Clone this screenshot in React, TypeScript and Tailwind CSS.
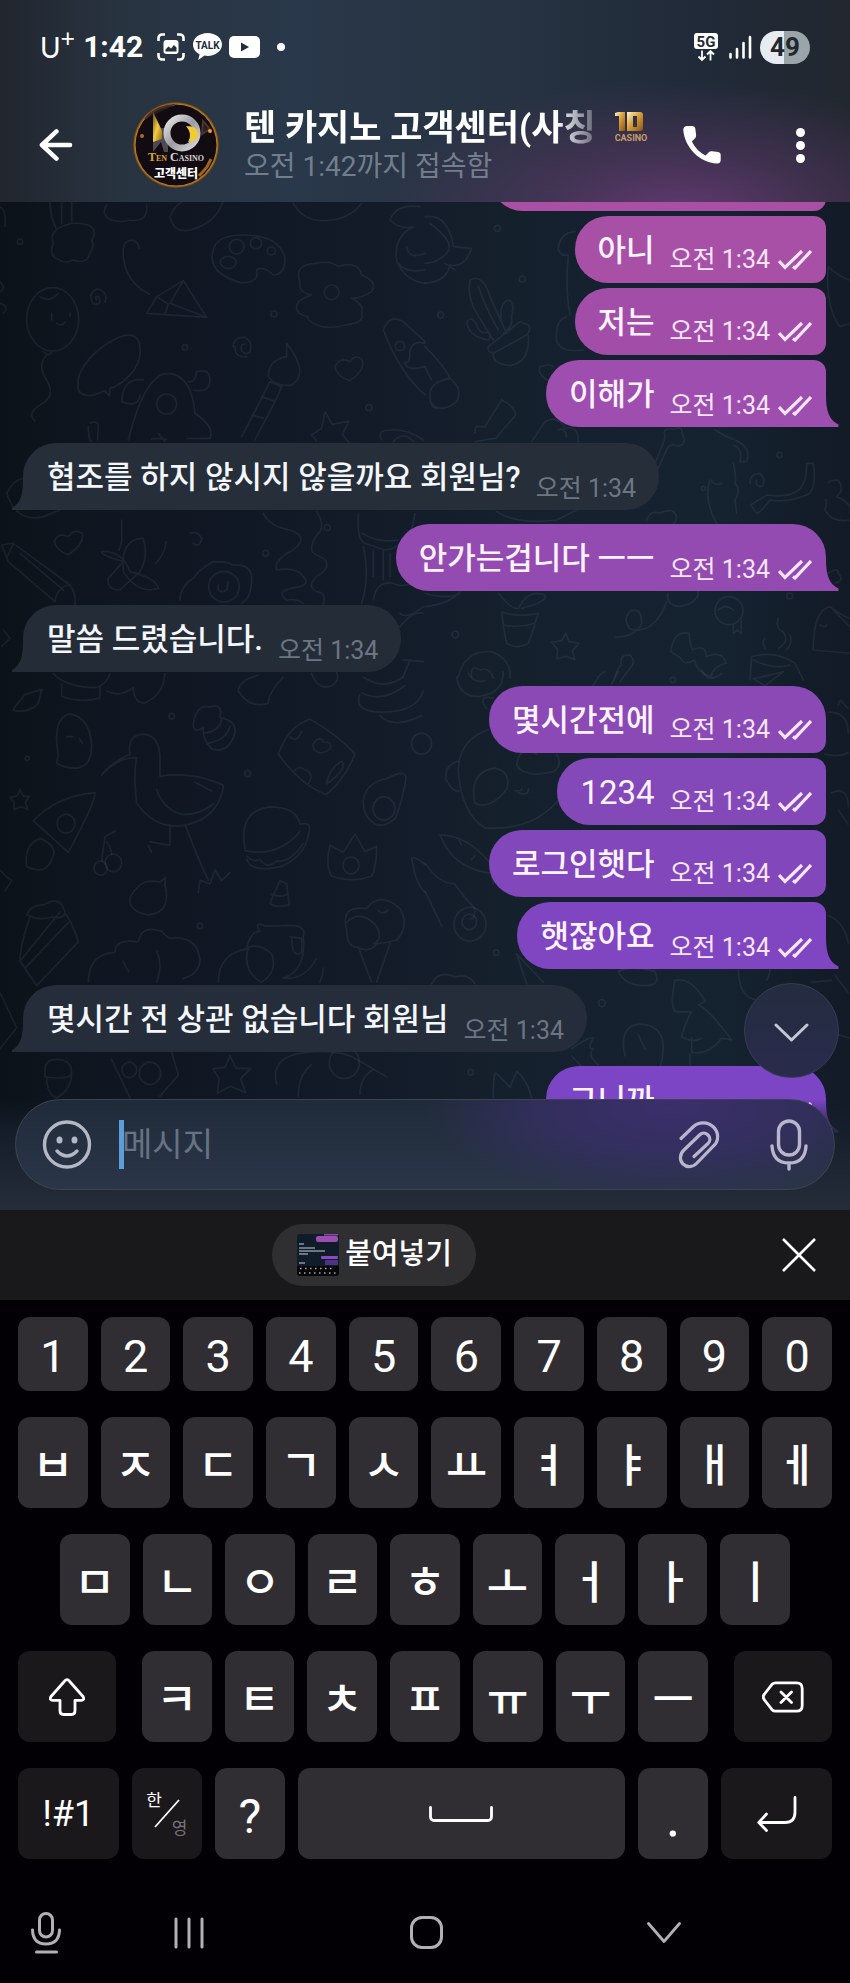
import { useState } from "react";
import clsx from "clsx";

type Message = {
  text: string;
  color: string;
};

type Group = {
  from: "me" | "them";
  messages: Message[];
  continued?: boolean;
};

const TIME = "오전 1:34";

const groups: Group[] = [
  {
    from: "me",
    continued: true,
    messages: [
      { text: "아니", color: "bg-[#a750a6]" },
      { text: "저는", color: "bg-[#a24ea9]" },
      { text: "이해가", color: "bg-[#9d4eae] text-[#9d4eae]" },
    ],
  },
  {
    from: "them",
    messages: [
      { text: "협조를 하지 않시지 않을까요 회원님?", color: "bg-[#252e39] text-[#252e39]" },
    ],
  },
  {
    from: "me",
    messages: [{ text: "안가는겁니다 ㅡㅡ", color: "bg-[#934ab1] text-[#934ab1]" }],
  },
  {
    from: "them",
    messages: [{ text: "말씀 드렸습니다.", color: "bg-[#242d37] text-[#242d37]" }],
  },
  {
    from: "me",
    messages: [
      { text: "몇시간전에", color: "bg-[#8a49b4]" },
      { text: "1234", color: "bg-[#8449b8]" },
      { text: "로그인햇다", color: "bg-[#8147bb]" },
      { text: "햇잖아요", color: "bg-[#8045c1] text-[#8045c1]" },
    ],
  },
  {
    from: "them",
    messages: [
      { text: "몇시간 전 상관 없습니다 회원님", color: "bg-[#252d3a] text-[#252d3a]" },
    ],
  },
  {
    from: "me",
    messages: [{ text: "그니까", color: "bg-[#7c45c6] text-[#7c45c6]" }],
  },
];

const numberKeys = ["1", "2", "3", "4", "5", "6", "7", "8", "9", "0"];
const topKeys = ["ㅂ", "ㅈ", "ㄷ", "ㄱ", "ㅅ", "ㅛ", "ㅕ", "ㅑ", "ㅐ", "ㅔ"];
const homeKeys = ["ㅁ", "ㄴ", "ㅇ", "ㄹ", "ㅎ", "ㅗ", "ㅓ", "ㅏ", "ㅣ"];
const bottomKeys = ["ㅋ", "ㅌ", "ㅊ", "ㅍ", "ㅠ", "ㅜ", "ㅡ"];

function StatusBar() {
  return (
    <div className="flex h-[94px] items-center pr-10 pl-10 text-white">
      <span className="flex items-start font-['Lato'] leading-none">
        <span className="text-[28px]">U</span>
        <span className="-mt-2 text-[25px]">+</span>
      </span>
      <span className="ml-2 text-[30px] leading-none font-bold">1:42</span>
      <svg width="28" height="28" viewBox="0 0 28 28" className="ml-3.5" fill="none">
        <path
          d="M1.5 8V5a3.5 3.5 0 0 1 3.500-3.500H8M20 1.500h3A3.500 3.500 0 0 1 26.500 5V8M26.500 20v3a3.500 3.500 0 0 1-3.500 3.500H20M8 26.500H5A3.500 3.500 0 0 1 1.500 23V20"
          stroke="#fff"
          strokeWidth="2.600"
        />
        <rect x="6.500" y="7" width="15" height="14" rx="3" fill="#fff" />
        <path d="M8.500 18.500v-2l3-3 2.500 2 3-3.500 2.500 2.500v4z" fill="#27323f" />
      </svg>
      <svg width="29" height="28" viewBox="0 0 29 28" className="ml-2">
        <path
          d="M14.500 0C6.500 0 0 5 0 11.500c0 4.200 2.700 7.800 6.600 9.800L5.200 27l6.300-4.400c1 .2 2 .3 3 .3 8 0 14.500-5 14.500-11.400S22.500 0 14.500 0z"
          fill="#fff"
        />
        <text
          x="14.500"
          y="15.500"
          textAnchor="middle"
          className="fill-[#222d3a] text-[10px] font-bold"
        >
          TALK
        </text>
      </svg>
      <svg width="31" height="22" viewBox="0 0 31 22" className="ml-[7px]">
        <rect width="31" height="22" rx="5" fill="#fff" />
        <path d="M12 6.500v9l8-4.500z" fill="#222d3a" />
      </svg>
      <span className="ml-[17px] size-2 rounded-full bg-white" />

      <svg width="24" height="29" viewBox="0 0 24 29" className="ml-auto">
        <rect width="24" height="16" rx="3" fill="#fff" />
        <text
          x="12"
          y="13.500"
          textAnchor="middle"
          className="fill-[#1f2a37] text-[15px] font-bold"
        >
          5G
        </text>
        <path
          d="M8 17.500v9M4.500 23.500 8 27l3.500-3.500M16.500 27.500v-9M13 21.500l3.500-3.500 3.500 3.500"
          stroke="#fff"
          strokeWidth="1.800"
          fill="none"
        />
      </svg>
      <svg width="24" height="24" viewBox="0 0 24 24" className="ml-2.5">
        <path
          d="M2.500 19v3.500M9 14v8.500M15.500 8v14.500M22 2v20.500"
          stroke="#fff"
          strokeWidth="2.600"
          strokeLinecap="round"
        />
      </svg>
      <span className="ml-2 flex h-[33px] w-[50px] items-center justify-center rounded-full bg-[linear-gradient(90deg,#e7ebf2_48%,#9aa5a9_48%)] text-[26px] leading-none font-bold text-[#22272e]">
        49
      </span>
    </div>
  );
}

function Avatar() {
  return (
    <svg width="86" height="86" viewBox="0 0 86 86" className="ml-[60px] shrink-0" role="img">
      <defs>
        <radialGradient id="ring" cx=".5" cy=".5" r=".5">
          <stop offset=".93" stopColor="#e09a2c" />
          <stop offset="1" stopColor="#5a3810" />
        </radialGradient>
        <linearGradient id="gold" x1="0" y1="0" x2="1" y2="1">
          <stop offset="0" stopColor="#6b4a12" />
          <stop offset=".5" stopColor="#f4cf3d" />
          <stop offset="1" stopColor="#8d6216" />
        </linearGradient>
        <linearGradient id="steel" x1="0" y1="0" x2="1" y2="1">
          <stop offset="0" stopColor="#e8e8ea" />
          <stop offset=".5" stopColor="#9b9ba0" />
          <stop offset="1" stopColor="#d8d8dc" />
        </linearGradient>
        <linearGradient id="wordmark">
          <stop offset=".34" stopColor="#d9a62e" />
          <stop offset=".34" stopColor="#d6d6da" />
        </linearGradient>
      </defs>
      <circle cx="43" cy="43" r="43" fill="url(#ring)" />
      <circle cx="43" cy="43" r="40.500" fill="#120c12" />
      <path d="M12 17c8-10 20-14 30-14M70 19l7 8-8 5z" stroke="#4a3230" strokeWidth="2" fill="#2c1d1c" />
      <path d="M20 10l8 16h5l2-8v32h-4l-3-10-8 10z" fill="#4d4a52" />
      <path d="M20 10l9 19v8l-9 3z" fill="url(#gold)" />
      <circle cx="49" cy="31" r="15" fill="none" stroke="url(#steel)" strokeWidth="7" />
      <path d="M53 24q12 0 12 8t-10 8q5-8-2-16z" fill="#f0cb34" />
      <circle cx="77" cy="29" r="2" fill="#e89a3c" />
      <circle cx="9" cy="34" r="2" fill="#b06a2c" />
      <path d="M66 74l8-9 4-8" stroke="#9c6420" strokeWidth="3" fill="none" />
      <text
        x="43"
        y="59"
        textAnchor="middle"
        fill="url(#wordmark)"
        className="font-['Liberation_Serif'] text-[12px] font-bold [font-variant-caps:small-caps]"
      >
        Ten Casino
      </text>
      <text
        x="43"
        y="76"
        textAnchor="middle"
        className="fill-white font-['Noto_Sans_CJK_KR'] text-[12px] font-black"
      >
        고객센터
      </text>
    </svg>
  );
}

function Header() {
  return (
    <header className="bg-[radial-gradient(ellipse_36%_66%_at_80%_106%,#613970_0%,#52355fa6_45%,transparent_100%),linear-gradient(90deg,#21262f_0%,#283340_14%,#29384a_34%,#263241_62%,#202a38_82%,#22272f_100%)] pb-1.5">
      <StatusBar />
      <div className="flex h-[102px] items-center pr-[45px] pl-[39px] text-white">
        <button type="button" aria-label="뒤로">
          <svg width="34" height="34" viewBox="0 0 35 34" fill="none" stroke="#fff" strokeWidth="4.600" strokeLinecap="round" strokeLinejoin="round">
            <path d="M32 17H3M18 3 3 17l15 14" />
          </svg>
        </button>
        <Avatar />
        <div className="ml-[25px] w-[354px] shrink-0 pt-0.5">
          <h1 className="overflow-hidden mask-[linear-gradient(90deg,#000_88%,#0003_100%)] text-[35px] leading-[42px] font-bold whitespace-nowrap">
            텐 카지노 고객센터(사칭
          </h1>
          <p className="text-[28px] leading-[34px] text-[#737e8c]">오전 1:42까지 접속함</p>
        </div>
        <svg width="38" height="32" viewBox="0 0 38 32" className="mb-9 ml-3.5 shrink-0">
          <defs>
            <linearGradient id="coin" x1="0" y1="0" x2="1" y2="1">
              <stop offset="0" stopColor="#fff3cf" />
              <stop offset=".45" stopColor="#d9a03a" />
              <stop offset="1" stopColor="#8a5512" />
            </linearGradient>
          </defs>
          <path d="M3 2l3-1h7v19H7V5H3z" fill="url(#coin)" />
          <path d="M15 1h13q3 0 3 3v13q0 3-3 3H15zM21 5v11h4V5z" fill="url(#coin)" fillRule="evenodd" />
          <text x="19" y="30" textAnchor="middle" className="fill-[#c79b6a] text-[9px] font-bold">
            CASINO
          </text>
        </svg>
        <button type="button" aria-label="통화" className="ml-auto">
          <svg width="38" height="38" viewBox="0 0 38 38" fill="#fff">
            <path d="M4 0h5.500q2.500 0 2.800 2.500l.8 6.500q.2 1.800-1 3.200L8.800 15.500Q14 25.500 22.500 29.500l3.300-3.300q1.300-1.300 3.200-1l6.300.8q2.400.4 2.400 2.800V34q0 3.500-3.700 3.500C16 36.500 1.500 21 .3 4 .2 0 4 0 4 0z" />
          </svg>
        </button>
        <button type="button" aria-label="더보기" className="ml-[75px] flex w-[9px] shrink-0 flex-col gap-1">
          <span className="size-[9px] rounded-full bg-white" />
          <span className="size-[9px] rounded-full bg-white" />
          <span className="size-[9px] rounded-full bg-white" />
        </button>
      </div>
    </header>
  );
}

// Line drawings of the chat wallpaper, one group per quarter of the screen
function Wallpaper() {
  return (
    <svg
      className="absolute inset-0 h-full w-full"
      fill="none"
      stroke="#8fa6b8"
      strokeOpacity=".1"
      strokeWidth="5"
      strokeLinecap="round"
      strokeLinejoin="round"
      aria-hidden="true"
    >
      <g transform="translate(0 -2) scale(.3333)">
        <path d="M150 0q0 50 20 88M185 0v70M215 0v70M170 88q-20 20-10 40q-15 40 15 50q20 15 45 2q40 15 50-20q15-20 5-40q20-30-10-45q-50-15-95 13" />
        <path d="M320 15q-20 30 15 45q30 10 50 0q60 10 55-45M510 50q20-50 60-50M510 50q10 50 60 40q80-20 100-90M880 10q30 55 100 52q70-5 105-52" />
        <path d="M640 150q10-45 90-45q110 0 125 70q0 50-35 50q-30-30-50-15q10 40-50 38q-100-30-80-98z" />
        <circle cx="710" cy="140" r="22" />
        <circle cx="768" cy="130" r="17" />
        <circle cx="814" cy="153" r="12" />
        <ellipse cx="685" cy="187" rx="24" ry="18" />
        <path d="M418 145q-5-30-35-22q-25 15-5 85q20 50 70 75M440 340l30-50 80-48 70 110zM470 290l35 22-10 30M550 242l-40 68 110 42" />
        <path d="M900 245q-20-50 45-55q50-10 70 10q60-20 70 25q50 20 30 50q-30 20-60 20q40 20 30 45q10 30-50 35q-30 10-70 5q-50-20-40-30q-50-10-30-45q20-15 40-20q-40-5-35-40z" />
        <circle cx="995" cy="277" r="22" />
        <path d="M1170 60q20-50 90-40M1170 60q30 30 70 20q-60 30-50 100q20 60 85 70M1275 160q-50 20-55-20M1275 210q-60 10-80-20" />
        <ellipse cx="158" cy="358" rx="78" ry="95" />
        <path d="M120 290q30 20 55-10M155 340v20M210 340v10M170 370q15 10 25-3M130 455l15 10 10-8M140 465q-30 30 0 75q30 50-20 75q-40 25-15 48" />
        <path d="M290 300q-10-15 5-10q15 25-15 22q-20-30 10-45q35 5 25 40M700 440q0-30 35-28q25 15 15 45q-15 10-25-5q-5-20 10-20M705 440q0 35 35 30" />
        <path d="M235 570q-10-60 60-120q90-70 120-30q20 60-30 110q-30 30-55 35l-2 22-15-15q-60 30-78-2z" />
        <path d="M385 720q50-200 120-200q70 5 80 120q60 40 45 75h-70M430 540q-60-10-65 65q50 20 55-20M565 545q20 5 25-30q40-10 40 25q0 40-50 30M500 718q-30-5-45 0M475 700l20 25" />
        <circle cx="500" cy="612" r="30" />
        <path d="M860 430q70 90 15 125q-50 5-70-25q0-50 55-60zM810 545l35 15-20 45-60 115M810 545q-30 60-85 165M785 590l35 12M755 645l35 10" />
        <path d="M1050 485q-30-15-45 15q5 30 45 42q50-35 35-65q-20-15-35 8zM205 1010q-30-15-42 15q5 25 42 40q50-35 42-65q-25-15-42 10z" />
        <path d="M1150 390q20-50 60-25l65 60M1150 390q50 130 125 195M1275 430q-40-10-45 25q0 40-15 30q0 30 60 15" />
        <circle cx="1200" cy="438" r="14" />
        <path d="M975 635l22 38 50-10-20 40 20 25M975 635l-10 50-30 20 15 18M1145 720q-15-30 25-30q50-5 100 30M1180 725q30-35 60 0M270 670q20-10 25 5l-2 45M265 680q0 40 10 45" />
        <path d="M5 1035l35-5 170 125q20 30 15 60M5 1035l20 50 140 120M40 1030l-20 45M210 1155q-40 5-45 50M60 1060l130 110" />
        <path d="M305 1055q60-5 85 60q80 20 85 50q-60 20-105-50q-10-100 60-100q15 60-10 100l-60 55q-40 0-35-35l45-50q-70-20-65-30zM365 960v60q0 10-8 30M498 1025q0 30-30 65" />
        <path d="M540 1200q0-40 40-65q20-30 60-50q50 0 55 10q60-5 60 40q0 60-30 75" />
        <circle cx="672" cy="1160" r="46" />
        <path d="M655 1155v15q10 10 25 0l5-25" />
        <path d="M790 940q20 40 80 50q60 20 10 60q-60 30-50 60q60-10 80 20q20 20-10 30q-80 10-40 40q30-5 50 10M950 935q30 50 0 70q-30 50 0 60q50 20 20 50q-60 40-20 60q30 0 20 40" />
        <path d="M570 1000q20-10 35 15q-5 30-25 15" />
        <path d="M1075 940q-5 80 20 90l60 20q80-10 90-110M1085 1000q50 30 110 20M1090 1040q20 90-5 170M1120 1050v80M1150 1050v90M1170 1060v70M1120 1200q10-60 60-50q30 20 90-20M1200 1240q20 20 70-20M1200 1280q40-50 70-40M1210 1380l60 5M1230 1380l-20 50" />
        <path d="M20 880q20-40 50-45M20 880q30 90 110 70l50-20M10 1290l20 25-25 25M0 20q20 10 15 60M0 245q20 20 0 30M0 310q30 10 10 30" />
        <circle cx="555" cy="442" r="8" />
        <circle cx="822" cy="342" r="9" />
        <circle cx="1107" cy="623" r="9" />
        <circle cx="982" cy="983" r="9" />
        <circle cx="797" cy="1060" r="9" />
        <circle cx="60" cy="125" r="8" />
      </g>
      <g transform="translate(425 -2) scale(.3333)">
        <path d="M0 50q70-10 85 90l55 5q-20 60-65 50q-10 50-75 55M15 70q80 60 50 90t-65 30M60 190l30 20" />
        <path d="M135 240q40-20 60 50l50 110M135 240q-10 50 20 100l50 80M160 260q20 60 60 130M230 370q-10-60 20-70q20 5 10 50q5 30-25 50M125 365q15-20 30 10q10 30 35 20q10 20 0 25q-60-10-65-55zM190 440l95-75 25 10q10 15-5 30l-100 55q-20-5-15-20zM205 460q-5 30 50 37q60-10 55-90" />
        <path d="M400 150q0-50 50-55M400 150q10 20 30 15q-10 100 5 180M395 400q-10 60 80 50M395 400q0-40 30-50M1210 200q30 30 65 40M1210 200q-10 120 35 180l30-10" />
        <path d="M0 440q60 60 75 95q40 30 20 70q-50 40-80 0M75 535q-60 10-60 50t20 40M0 500l20 40" />
        <path d="M375 545q-40-20-30-45q30-10 40 0M150 700q0-20 5-20h25l50-80q40 20 42 45l-60 70q-40 5-60 10M320 725l40-60q40-20 60 20q40-10 40 40M400 690q20-10 25 20" />
        <path d="M690 790q30-70 30-80q-10-30 25-22q30-10 25 10q20 40-15 40q-20-10-30 10l-50 110" />
        <path d="M870 690q30 20 60 30q50 20 35 65M960 785h-15q10-40-20-50M890 850q-15 10-35-10q-20 60 20 130M1145 790h20q10 60-10 90q-60 30-120 20q-30 40-40 40l-18-25q30-20 50-30q70 10 100-20q20-30 18-75M925 790q10 40 5 60q20 20 0 50l5 40" />
        <path d="M975 850q0-30 30-30q20 20 5 40q-20 0-15-20M1210 850q0-10 30-10q20 30-5 50q50 20 40 50M1200 900q10-10 0 30q20 40 75 30" />
        <path d="M665 960q10-30 40-20q40-20 50 10q-5 30-30 50M215 935q60 40 180 25l60-30M0 1180q70 20 105 0M0 1220q80-10 110-50" />
        <path d="M230 1235q50 20 110 5l-10 30q-50 15-95 5zM235 1280l10 50q30 20 65 0l20-55M220 1180q40 50 60 45q30-60 80-40q10 20-70 40" />
        <path d="M422 1300l10 25 30 5-20 22 8 27-27-10-27 8 2-28-18-22 30-5zM100 1430q20-80 100-75q50 20 55 60v20M140 1430q-5-40 25-20q30-10 40 25" />
        <path d="M570 1312q60 0 80-40q0-50-30-40q-30 20-5 55q70 20 110-80M730 1180q-10 30 30 40q60-10 60-45" />
        <circle cx="912" cy="1232" r="42" />
        <path d="M925 1275v25l12-10 12 12v-40M880 1230q20-20 45 0M738 1350q10-60 55-50q0 30 10 50q40-20 40 20q50-20 60 20q-40 10-45 40q-40-10-50-50q-30 20-40-5l-30-20zM570 1430q10-30 20-35q-10-30 25-30q20 20 0 40l-30 40" />
        <path d="M980 1370q70-20 130 20l25 50M980 1370l-5 70M985 1380q60 30 110 15M1020 1345q-10-20 0-30M1060 1255q-10 30 15 40q20 30-15 50M1095 1305q10 20-10 45" />
        <path d="M1165 1350q0-120 50-130q40 30 60 35M1165 1350l110 10M1185 1275q15 10 20 0M1215 1220l60 60M1210 1120q30-20 30 0q20 20-10 30" />
        <circle cx="292" cy="237" r="9" />
        <circle cx="47" cy="345" r="9" />
        <circle cx="217" cy="85" r="9" />
        <circle cx="835" cy="865" r="6" />
        <circle cx="1094" cy="1188" r="9" />
        <circle cx="91" cy="1304" r="10" />
        <circle cx="1064" cy="765" r="8" />
      </g>
      <g transform="translate(0 468) scale(.3333 .3507)">
        <path d="M160 10q40 40 130 40q30-10 40-40M185 40v35q50 20 115 5V45M320 60q40 20 80-10q0 40 30 45q60-20 65-85M45 105l30-35 50-15-10 40q-30 30-75 20z" />
        <path d="M715 60q0-30 60-45M715 60q30 50 90 35q0-30 45-75M935 10q20 50 60 35q30-20 10-45M1080 70q-20 50 70 50q100 0 120-60M1085 65q60 30 130-20M1140 130q40 40 125 0M1090 20q60 40 120 0" />
        <path d="M175 245q-20-110 35-120q60 10 65 90q0 60-45 65q-40 0-60-15zM200 190h20M238 195l10 15" />
        <path d="M580 155q10-60 50-50q40-10 30 30q50 10 45 45q-20 60-70 45q-30-30-25-60q-30 15-30-10zM610 180q50-5 55-40M620 210q60-10 70-50" />
        <path d="M410 380q-10-90 0-130q-60 0-105 50q20-30 85-60q-10-50 35-57q50 0 55 60v60q60-10 130 5q70 20 60 25q-10 60-60 90q-120 60-200-43zM470 340q20 60 80 72q50 0 90-30M585 320l50 25M510 440v60l-60-10M555 440q40 100 70 160M595 635l5-35 30 10 15-40 20 30 25-22M445 500l10 20" />
        <path d="M835 240q30-80 95-100q90 50 135 100q-30 70-85 115q-70-20-145-115zM940 210q20-25 30-5q30 0 20 20q-20 15-35 10q-20-10-15-25zM870 190q20 20 35-15M880 290q20-20 35-5q30 10 10 40M980 320q10-40 45-60q20 20-45 65z" />
        <path d="M1090 370q10-50 70-60q60-30 58 0q-10 60-30 110q-30 30-60 20q-40-20-38-70z" />
        <circle cx="1152" cy="395" r="33" />
        <circle cx="1265" cy="210" r="30" />
        <path d="M60 340l10 20h18l-12 18 8 20-22-8-20 8v-22l-12-12 22-5zM100 430q70-70 185-80q0 30-80 170zM80 560q-10-60 40-80q50 20 40 50q-20 60-80 30z" />
        <circle cx="198" cy="438" r="27" />
        <circle cx="340" cy="550" r="25" />
        <circle cx="302" cy="565" r="20" />
        <path d="M305 545l10-70 30-15M320 490q10 10 15 35" />
        <path d="M735 510q-20-110 75-120q80 0 90 50q40-10 25 30q-10 60-80 90q-90 20-105-20M735 515q100 20 165-55M740 530q20 20 40 10q20 30 50 5q40 5 80-50" />
        <path d="M990 500l40 20 35-52 30 50 35-15q0 60-15 85q-60 20-120 0q-20-30-5-88z" />
        <circle cx="1053" cy="557" r="24" />
        <path d="M390 650q30-60 90-45l15-12v20q20 80-50 85q-60-10-55-48zM810 665l30-65 20 10 8 60q-40 10-58-5zM815 640q30 10 45 0M1235 535q20 0 40 20M1235 535q10 70 40 100" />
        <path d="M80 700q10-30 50-30q50-30 65 20q0 20-40 15q-40 10-70-5M90 705q-30 80-30 125l50 70 125-125q-20-60-40-80M60 830l120-140M75 850l130-130" />
        <path d="M265 890q0-80 80-85q0-40 70-30q10-50 70-30q20 20 25 20q80-10 90 60q0 40-50 55M470 800q20 40 0 90M370 830l15 30" />
        <path d="M655 890q0-80 85-95q10-50 40-50q-20-30 15-15q40 0 75-2q50 0 40 30q10 100-60 120q60 10 100-55M745 790q-20 70 40 100q50-30 30-80q-30-30-70-20M870 760l35 5v40q-30 20-30-45M970 850q0 20-10 40" />
        <path d="M1040 740q-20-70 60-60q40-50 100 0q30 50-10 90q-30 10-60 10q-20 30-60 10q-30 0-30-50zM1075 790l40 100M1170 780l-40 110M1135 685q10 15 30 0M1040 720q40-40 90 10q20 40-10 50" />
        <path d="M135 1140q0-30 35-30q45 0 45 40q-5 20-80 10zM140 1160q0 50 30 60q40-20 45-65M335 1110l55 110M480 1215l55-60-20-65M690 1100l18 35 44 2-30 28 15 40-45-18-40 20 5-42-18-28 36-4zM830 1180q-20-80 90-90q100-10 150 20l90 50M895 1215q0-60 40-90M1080 1210q0-50 40-70" />
        <circle cx="388" cy="1140" r="22" />
        <circle cx="450" cy="1150" r="32" />
        <circle cx="1033" cy="1120" r="45" />
        <circle cx="743" cy="295" r="9" />
        <circle cx="515" cy="132" r="8" />
        <circle cx="600" cy="730" r="8" />
        <circle cx="82" cy="252" r="6" />
        <path d="M0 920l50 100-50 60M0 570l20 20 15 10-20 30" />
      </g>
      <g transform="translate(425 468) scale(.3333 .3507)">
        <path d="M95 20q10 60 70 55q70-10 70-70M130 10q20 30 50 20M505 45q20-40 35-40M560 40l20-35M985 25l90-20-55 40zM830 0q20 40 60 10M1210 120q60 0 60 60M1200 240q40 10 70-5M1240 100q5-20 10-10l20 20" />
        <path d="M185 110q-30-40 20-30M100 290q0-90 90-120M100 290q10 120 80 160q150 10 230-90q0 0 0 0M100 260q-40 10-38 50q20 40 40 35M150 380q-20-90 60-100q50 10 35 60q-50 60-95 40zM275 270q10-60 60-30M275 270q20 40 110 20q30-20 10-50M270 345q20 0 20-5M280 350q30 10 30-10" />
        <path d="M45 470q80 0 150 80l10 60M45 470q40 100 160 110M100 480l10 20M140 540l10-10M0 550q40 60 90 60q20 30 60 70q0 30-15 30M0 630l50 100" />
        <circle cx="135" cy="725" r="48" />
        <circle cx="133" cy="718" r="22" />
        <path d="M275 810q-10-10 80 80M275 810l30 85M20 895q20-40 70-20q40-10 60 20M580 860q40-20 110 0q20 40-30 40q-60 0-80-40zM750 885q50-10 90 60l-20 10q30 10 100 100l-30-5q-40 50-90 40v-40M750 885q-20 90 10 90h40q-20 30-30 70q30 20 60 5M795 1095v30" />
        <path d="M940 850q0 80 50 90M1035 850q0 20-10 35M1160 890l60-5M1210 700q50 20 60 80M1230 870l40 50M1240 1040l35 10M1220 350q50-20 50 40M1240 400l30 40" />
        <path d="M600 1100q-20-80 40-90q70 0 75 60q0 40-10 60M640 1040l20 40M440 1080q60-40 65-30q-20 30 0 30q-20 20 15 45M205 1220q0-80 10-70l40 40 20-45q30 20 45 75M440 1100l30 30" />
        <circle cx="531" cy="950" r="10" />
        <circle cx="137" cy="1147" r="8" />
        <circle cx="214" cy="806" r="8" />
        <circle cx="744" cy="28" r="8" />
      </g>
    </svg>
  );
}

function Checks() {
  return (
    <svg width="34" height="20" viewBox="0 0 34 20" fill="none" stroke="currentColor" strokeWidth="3.200" className="shrink-0">
      <path d="M1 11l6 6.500L24 1M15 16.500l2 1.500L33 1" />
    </svg>
  );
}

function Bubble({ message, mine, first, last }: { message: Message; mine: boolean; first: boolean; last: boolean }) {
  return (
    <div
      className={clsx(
        "relative flex h-[67px] w-fit items-center",
        message.color,
        mine ? "rounded-l-[33px] pr-3.5 pl-[23px]" : "rounded-t-[33px] rounded-br-[33px] pr-[23px] pl-6",
        mine && (first ? "rounded-tr-[33px]" : "rounded-tr-xl"),
        mine && !last && "rounded-br-xl",
      )}
    >
      <p
        className={clsx(
          "mt-0.5 leading-10",
          /^\d+$/.test(message.text) ? "text-[33px]" : "text-[31px] font-medium",
          mine ? "text-[#fdf3ff]" : "text-[#f3f6fa]",
        )}
      >
        {message.text}
      </p>
      <span
        className={clsx(
          "ml-[15px] flex items-center gap-2 text-[25px] leading-7",
          last ? "mt-6" : "mt-5",
          mine ? "text-[#f7e6fb]" : "text-[#6c7683]",
        )}
      >
        <time>{TIME}</time>
        {mine && <Checks />}
      </span>
      {last && mine && (
        <svg width="13" height="32" viewBox="0 0 13 32" className="absolute bottom-0 left-full fill-current">
          <path d="M0 0C0 16 3 25 12.500 29.500V32H0z" />
        </svg>
      )}
      {!mine && (
        <svg width="11" height="32" viewBox="0 0 11 32" className="absolute right-full bottom-0 fill-current">
          <path d="M11 0C11 16 9 25 0 30v2h11z" />
        </svg>
      )}
    </div>
  );
}

function MessageList() {
  return (
    <div className="relative flex flex-col pr-6 pl-[23px]">
      <div className="flex h-[9px] items-end justify-end overflow-hidden" aria-hidden="true">
        <div className="h-[67px] w-[336px] shrink-0 rounded-l-[33px] rounded-r-xl bg-[#a94fa4]" />
      </div>
      <div className="mt-[5px] flex flex-col gap-3.5">
        {groups.map((group, i) => (
          <div
            key={i}
            className={clsx(
              "flex flex-col gap-[5px]",
              group.from === "me" ? "items-end" : "items-start",
              group.messages.length > 1 && "pb-0.5",
            )}
          >
            {group.messages.map((message, j) => (
              <Bubble
                key={message.text}
                message={message}
                mine={group.from === "me"}
                first={j === 0 && !group.continued}
                last={j === group.messages.length - 1}
              />
            ))}
          </div>
        ))}
      </div>
    </div>
  );
}

function Composer() {
  const [draft, setDraft] = useState("");

  return (
    <div className="relative -mt-[34px] bg-[linear-gradient(180deg,transparent_0%,#161f2cd9_30%,#252d3a_100%)] px-[15px] pb-5">
      <button
        type="button"
        aria-label="맨 아래로"
        className="absolute right-[11px] bottom-[132px] flex size-[95px] items-center justify-center rounded-full border border-[#343e50] bg-[linear-gradient(180deg,#232c40,#2a2b4c)] pt-1"
      >
        <svg width="35" height="19" viewBox="0 0 35 19" fill="none" stroke="#c3c8d2" strokeWidth="3" strokeLinecap="round" strokeLinejoin="round">
          <path d="M2 2l15.500 15L33 2" />
        </svg>
      </button>
      <form
        className="flex h-[91px] items-center rounded-full border border-[#3b4552] bg-[radial-gradient(ellipse_30%_100%_at_80%_10%,#3b2f6c_0%,#362f63cc_55%,transparent_100%),linear-gradient(180deg,#1f2b39,#2a3548)] pr-[26px] pl-[26px]"
        onSubmit={(e) => e.preventDefault()}
      >
        <button type="button" aria-label="이모티콘">
          <svg width="50" height="49" viewBox="0 0 49 49" fill="none" stroke="#b3b8c2" strokeWidth="3.400" strokeLinecap="round">
            <circle cx="24.500" cy="24.500" r="22.500" />
            <path d="M14.500 31q10 10 20 0" />
            <ellipse cx="17" cy="20" rx="3" ry="3.500" fill="#b3b8c2" stroke="none" />
            <ellipse cx="32" cy="20" rx="3" ry="3.500" fill="#b3b8c2" stroke="none" />
          </svg>
        </button>
        <div className="relative ml-[27px] min-w-0 flex-1">
          <input
            type="text"
            aria-label="메시지"
            placeholder="메시지"
            value={draft}
            onChange={(e) => setDraft(e.target.value)}
            className="w-full bg-transparent pl-[3px] text-[33px] leading-[49px] text-white outline-none placeholder:text-[#667383]"
          />
          <span className="absolute inset-y-0 left-0 w-[5px] bg-[#5b9fd6]" />
        </div>
        <button type="button" aria-label="파일 첨부" className="mr-[50px]">
          <svg width="42" height="48" viewBox="0 0 42 48" fill="none" stroke="#b9b5cc" strokeWidth="3.200" strokeLinecap="round">
            <path d="M3 17.500 15.500 5.500C21 .5 30 .5 35.500 6s5.500 14 0 19L18.500 42.500c-4 4-10 4-13.500.5s-3.500-9.500.5-13.500L21.500 14c2.500-2.500 6-2.500 8.500 0s2.500 6 0 8.500L16 35.500" />
          </svg>
        </button>
        <button type="button" aria-label="음성 메시지">
          <svg width="38" height="52" viewBox="0 0 38 52" fill="none" stroke="#b9b5cc" strokeWidth="3.400" strokeLinecap="round">
            <rect x="8.500" y="2" width="21" height="34" rx="10.500" />
            <path d="M2 27q1 17 17 17t17-17M19 44v6" />
          </svg>
        </button>
      </form>
    </div>
  );
}

function Key({ label, className }: { label: string; className?: string }) {
  return (
    <button
      type="button"
      className={clsx(
        "flex items-center justify-center rounded-xl bg-[#302e32] leading-none text-white",
        className ?? "h-[91px] pt-2 text-[45px] font-medium",
      )}
    >
      {label}
    </button>
  );
}

function PasteBar() {
  return (
    <div className="flex h-[90px] items-center bg-[#19181a]">
      <div className="flex flex-1 justify-center">
        <button
          type="button"
          className="flex h-[62px] items-center gap-1.5 rounded-full bg-[#2f2e31] pr-6 pl-[25px] text-[29px] font-medium text-white"
        >
          <svg width="42" height="42" viewBox="0 0 42 42" aria-hidden="true">
            <rect width="42" height="36" rx="3" fill="#101c29" />
            <rect x="27" y="0" width="14" height="1.500" fill="#8c4aa8" />
            <rect x="19" y="2" width="22" height="6" rx="2" fill="#9a4fb0" />
            <rect x="24" y="22" width="17" height="3" rx="1" fill="#8c4ac0" />
            <rect x="28" y="26" width="13" height="5" rx="1" fill="#4c3482" />
            <path d="M2 10h5M2 14h16M2 17h26M2 20h9M2 29h6" stroke="#c8d0d8" strokeWidth="1" />
            <path d="M0 32h42v7q0 3-3 3H3q-3 0-3-3z" fill="#07070a" />
            <path d="M3 34.500h34M2 39h38" stroke="#a8a8ac" strokeWidth="1.500" strokeDasharray="1.500 3.500" />
          </svg>
          붙여넣기
        </button>
      </div>
      <button type="button" aria-label="닫기" className="flex w-[102px] justify-center">
        <svg width="34" height="34" viewBox="0 0 34 34" stroke="#fff" strokeWidth="2.600">
          <path d="M1 1l32 32M33 1 1 33" />
        </svg>
      </button>
    </div>
  );
}

function Keyboard() {
  return (
    <div className="flex flex-col gap-[26px] px-[18px] pt-[17px]">
      <div className="grid grid-cols-10 gap-[13px]">
        {numberKeys.map((key) => (
          <Key key={key} label={key} className="h-[74px] pt-1 text-[45px]" />
        ))}
      </div>
      <div className="grid grid-cols-10 gap-[13px]">
        {topKeys.map((key) => (
          <Key key={key} label={key} />
        ))}
      </div>
      <div className="grid grid-cols-9 gap-[13px] px-[42px]">
        {homeKeys.map((key) => (
          <Key key={key} label={key} />
        ))}
      </div>
      <div className="grid grid-cols-[98fr_567fr_98fr] gap-[26px]">
        <button type="button" aria-label="Shift" className="flex items-center justify-center rounded-xl bg-[#1a181b]">
          <svg width="36" height="38" viewBox="0 0 36 38" fill="none" stroke="#fff" strokeWidth="2.800" strokeLinejoin="round">
            <path d="M15.500 3.200q2.500-3 5 0L34 18.500q2 3.500-1.500 3.800H26V33q0 3.500-3.500 3.500h-8Q11 36.500 11 33V22.300H3.500Q0 22 2 18.500z" />
          </svg>
        </button>
        <div className="grid grid-cols-7 gap-[13px]">
          {bottomKeys.map((key) => (
            <Key key={key} label={key} />
          ))}
        </div>
        <button type="button" aria-label="지우기" className="flex items-center justify-center rounded-xl bg-[#1a181b]">
          <svg width="42" height="32" viewBox="0 0 42 32" fill="none" stroke="#fff" strokeWidth="2.800" strokeLinecap="round" strokeLinejoin="round">
            <path d="M13.500 1.800h21q5.700 0 5.700 5.700v17q0 5.700-5.700 5.700h-21q-2 0-3.500-1.500L2.500 19q-2.500-3 0-6L10 3.300q1.500-1.500 3.500-1.500zM19 11l10.500 10.500M29.500 11 19 21.500" />
          </svg>
        </button>
      </div>
      <div className="grid grid-cols-[101fr_70fr_70fr_328fr_70fr_111fr] gap-[13px]">
        <button type="button" className="h-[91px] rounded-xl bg-[#1a181b] text-[36px] text-white">
          !#1
        </button>
        <button
          type="button"
          className="flex items-center justify-center rounded-xl bg-[#1a181b] text-[17px] leading-5 text-white"
        >
          <span className="-mr-2 mb-7">한</span>
          <svg width="26" height="29" viewBox="0 0 26 29" stroke="#fff" strokeWidth="1.800">
            <path d="M1 28 25 1" />
          </svg>
          <span className="mt-7 -ml-2 text-[#77757a]">영</span>
        </button>
        <Key label="?" className="h-[91px] pt-1.5 text-[48px]" />
        <button type="button" aria-label="스페이스" className="flex items-center justify-center rounded-xl bg-[#302e32]">
          <svg width="64" height="16" viewBox="0 0 64 16" fill="none" stroke="#fff" strokeWidth="2.800" strokeLinecap="round">
            <path d="M1.500 1.500v9q0 4 4 4h53q4 0 4-4v-9" />
          </svg>
        </button>
        <Key label="." className="h-[91px] pt-1.5 text-[56px]" />
        <button type="button" aria-label="입력" className="flex items-center justify-center rounded-xl bg-[#1a181b]">
          <svg width="40" height="36" viewBox="0 0 40 36" fill="none" stroke="#fff" strokeWidth="2.800" strokeLinecap="round" strokeLinejoin="round">
            <path d="M38 1.500V16q0 10.500-10 10.500H2M9.500 18 1.800 26.500 9.500 34.500" />
          </svg>
        </button>
      </div>
    </div>
  );
}

function SystemNav() {
  return (
    <nav className="grid h-[124px] grid-cols-[61px_9px_1fr_1fr_1fr_67px] items-center pt-[23px]">
      <button type="button" aria-label="음성 입력" className="flex justify-end">
        <svg width="30" height="42" viewBox="0 0 30 42" fill="none" stroke="#b2b0b4" strokeWidth="3" strokeLinecap="round">
          <rect x="8.500" y="1.500" width="13" height="23.500" rx="6.500" />
          <path d="M1.500 18q.5 14 13.500 14t13.500-14M5.500 40h20" />
        </svg>
      </button>
      <button type="button" aria-label="최근 앱" className="col-start-3 flex justify-center">
        <svg width="30" height="32" viewBox="0 0 30 32" stroke="#b2b0b4" strokeWidth="3" strokeLinecap="round">
          <path d="M2 2v28M15 2v28M28 2v28" />
        </svg>
      </button>
      <button type="button" aria-label="홈" className="flex justify-center">
        <span className="size-[33px] rounded-xl border-[3px] border-[#b2b0b4]" />
      </button>
      <button type="button" aria-label="키보드 닫기" className="flex justify-center">
        <svg width="34" height="21" viewBox="0 0 34 21" fill="none" stroke="#b2b0b4" strokeWidth="2.800" strokeLinecap="round" strokeLinejoin="round">
          <path d="M1.500 1.500 17 19.500 32.500 1.500" />
        </svg>
      </button>
    </nav>
  );
}

export default function App() {
  return (
    <div className="overflow-hidden bg-[#020005] font-['Roboto','Noto_Sans_CJK_KR',sans-serif]">
      <Header />
      <main className="relative bg-[linear-gradient(90deg,#0b1219_0%,#0f1621_12%,#121927_38%,#15202d_60%,#152230_85%,#121a26_100%)]">
        <Wallpaper />
        <MessageList />
        <Composer />
      </main>
      <PasteBar />
      <Keyboard />
      <SystemNav />
    </div>
  );
}
